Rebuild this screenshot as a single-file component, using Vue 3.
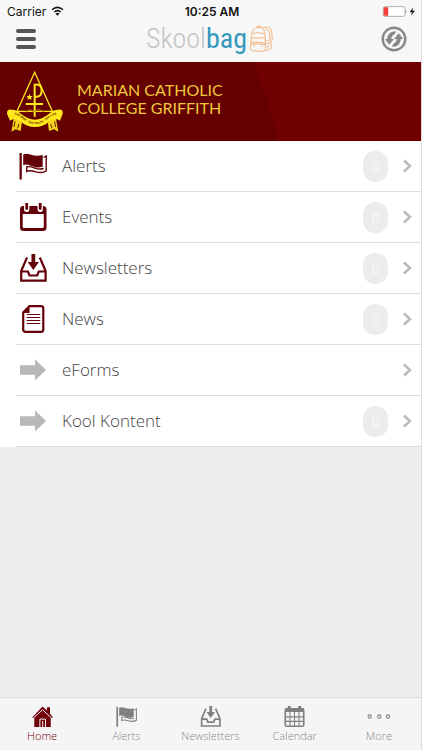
<template>
  <div class="app">
    <header class="header">
      <div class="status">
        <span class="carrier">
          Carrier
          <svg class="wifi" viewBox="0 0 26 20" aria-hidden="true">
            <path d="M2 7.5Q13 -2 24 7.5" fill="none" stroke="currentColor" stroke-width="3" />
            <path d="M6.5 12Q13 6.5 19.5 12" fill="none" stroke="currentColor" stroke-width="3" />
            <path d="M9 15Q13 11.5 17 15L13 19.5Z" fill="currentColor" />
          </svg>
        </span>
        <span class="time">10:25 AM</span>
        <span class="power">
          <svg class="battery" viewBox="0 0 104 34" aria-hidden="true">
            <rect x="2" y="2" width="67" height="30" rx="5" fill="#fff" stroke="#888" stroke-width="2" />
            <path d="M5 4H17V30H5Q3 30 3 28V6Q3 4 5 4Z" fill="#f8403c" />
            <path d="M71 12Q76 17 71 22Z" fill="#555" />
            <path d="M94 5L83 19H91L87 30L100 15H92Z" fill="#111" />
          </svg>
        </span>
      </div>

      <div class="toolbar">
        <button type="button" class="tool menu" aria-label="Menu">
          <span></span>
          <span></span>
          <span></span>
        </button>

        <h1 class="logo">
          <span class="skool">Skool</span><span class="bag">bag</span>
          <svg class="backpack" viewBox="0 0 72 82" fill="none" stroke="#f3b580" stroke-width="3" aria-hidden="true">
            <path d="M8 30Q8 8 28 6Q48 6 48 28L50 70Q50 78 42 78L10 76Q4 75 4 68Z" />
            <path d="M22 7Q24 1 31 2Q37 3 37 8" />
            <path d="M10 24Q28 20 47 25" />
            <path d="M7 38H49M6 51Q26 49 50 53M6 56Q26 54 50 58" />
            <path d="M15 56V64M39 57V65" />
            <path d="M40 7L58 5Q68 8 68 20L70 42L65 47L68 69L50 77" />
            <path d="M48 13Q58 8 61 22L64 43L52 47" />
            <path d="M52 56L65 50M54 70L60 58" />
          </svg>
        </h1>

        <button type="button" class="tool refresh" aria-label="Refresh">
          <svg viewBox="0 0 76 76" aria-hidden="true">
            <circle cx="38" cy="38" r="33" fill="none" stroke="#888" stroke-width="7" />
            <path d="M44 15Q19 15 18 38H11L24 55L38 38H30Q31 27 40 24Z" fill="#888" />
            <path d="M32 61Q57 61 58 38H65L52 21L38 38H46Q45 49 36 52Z" fill="#888" />
          </svg>
        </button>
      </div>
    </header>

    <section class="banner">
      <svg class="crest" viewBox="18 24 174 189" aria-hidden="true">
        <path d="M104 31L51 148H157Z" fill="none" stroke="#ffe81c" stroke-width="4" />
        <path d="M88 95L91 102L98 103L93 107L95 114L88 110L82 114L84 107L79 103L86 102Z" fill="#ffe81c" />
        <path
          d="M104 164V68Q125 66 125 86Q125 105 107 104M77 126H129"
          fill="none"
          stroke="#ffe81c"
          stroke-width="6"
        />
        <path d="M78 152Q88 136 101 150Q116 136 132 150" fill="none" stroke="#b87a10" stroke-width="3" />
        <path d="M42 165L34 209L47 202L62 207L66 178ZM167 165L175 209L162 202L147 207L143 178Z" fill="#f3d31c" />
        <path
          d="M21 155Q20 140 36 143Q50 143 64 156Q84 173 105 173Q126 173 146 156Q160 143 174 143Q190 140 188 155L180 176Q166 165 150 177Q130 195 105 195Q80 195 60 177Q44 165 30 176Z"
          fill="#ffe81c"
        />
        <path id="motto-line" d="M31 160Q48 154 65 168Q84 187 105 187Q128 187 147 168Q163 154 181 160" fill="none" />
        <text class="motto">
          <textPath href="#motto-line" startOffset="50%">THE WAY · THE TRUTH · THE LIFE</textPath>
        </text>
        <path d="M45 178L42 195M57 186L53 199M164 178L167 195M152 186L156 199" stroke="#6b2500" stroke-width="3" />
      </svg>
      <h2 class="school">
        <span>Marian Catholic</span>
        <span>College Griffith</span>
      </h2>
    </section>

    <main class="content">
      <ul class="list">
        <li v-for="item in items" :key="item.name">
          <a href="#" class="row" @click.prevent>
            <svg class="row-icon" :class="{ muted: item.icon === 'arrow' }" viewBox="0 0 28 28" aria-hidden="true">
              <path v-for="(shape, i) in icons[item.icon]" :key="i" :d="shape.d" :class="shape.type" />
            </svg>
            <span class="row-name">{{ item.name }}</span>
            <span v-if="item.count !== null" class="badge">{{ item.count }}</span>
            <svg class="chevron" viewBox="0 0 10 14" aria-hidden="true">
              <path d="M2 1.5L8 7L2 12.5" />
            </svg>
          </a>
        </li>
      </ul>
    </main>

    <nav class="tabs">
      <a
        v-for="tab in tabs"
        :key="tab.name"
        href="#"
        class="tab"
        :class="{ active: tab.name === activeTab }"
        @click.prevent="activeTab = tab.name"
      >
        <svg class="tab-icon" viewBox="0 0 28 28" aria-hidden="true">
          <path v-for="(shape, i) in icons[tab.icon]" :key="i" :d="shape.d" :class="shape.type" />
        </svg>
        <span>{{ tab.name }}</span>
      </a>
    </nav>
  </div>
</template>

<script setup>
import { ref } from 'vue'

const activeTab = ref('Home')

const items = [
  { name: 'Alerts', icon: 'flag', count: 0 },
  { name: 'Events', icon: 'events', count: 0 },
  { name: 'Newsletters', icon: 'inbox', count: 0 },
  { name: 'News', icon: 'page', count: 0 },
  { name: 'eForms', icon: 'arrow', count: null },
  { name: 'Kool Kontent', icon: 'arrow', count: 0 }
]

const tabs = [
  { name: 'Home', icon: 'home' },
  { name: 'Alerts', icon: 'flag' },
  { name: 'Newsletters', icon: 'inbox' },
  { name: 'Calendar', icon: 'calendar' },
  { name: 'More', icon: 'more' }
]

// all icons are drawn in a 28 x 28 box
const icons = {
  flag: [
    { type: 'solid', d: 'M.5 1H2.8V27.5H.5Z' },
    { type: 'solid', d: 'M4.2 2.5C9-.5 14 6 23.7 3V14.8C15 18 10 10.5 4.2 13.2Z' },
    { type: 'line thin', d: 'M24.5 5.5L27.2 4V19C19 24 14 16 7.7 19.5V15C13 13 18 19 24.5 16.5' }
  ],
  events: [
    {
      type: 'solid',
      d: 'M4 3H24Q27.5 3 27.5 6.5V24.5Q27.5 28 24 28H4.5Q1 28 1 24.5V6.5Q1 3 4 3Z'
    },
    { type: 'hole', d: 'M3.7 11H24.8V23.5Q24.8 25 23.3 25H5.2Q3.7 25 3.7 23.5Z' },
    { type: 'hole', d: 'M5 3V6Q5 9 7.7 9T10.4 6V3ZM18.5 3V6Q18.5 9 21.2 9T23.9 6V3Z' },
    { type: 'solid', d: 'M6.3 0H9.1V6Q7.7 8 6.3 6ZM19.8 0H22.6V6Q21.2 8 19.8 6Z' }
  ],
  inbox: [
    { type: 'line', d: 'M8 3.5L2.2 17V26.6H26.6V17L20.8 3.5' },
    { type: 'line', d: 'M2.2 17.5H9L10.5 21.5H18.2L19.8 17.5H26.6' },
    { type: 'solid', d: 'M12.5 0H16.2V8H20L14.3 16L8.7 8H12.5Z' }
  ],
  page: [
    { type: 'line', d: 'M10.5 1.2H22Q24.3 1.2 24.3 3.5V24.5Q24.3 26.8 22 26.8H6.5Q4.2 26.8 4.2 24.5V7.5Z' },
    { type: 'solid', d: 'M3.5 8L10.5 .5V8Z' },
    { type: 'line fine', d: 'M7.7 9.5H21.3M7.7 12.5H21.3M7.7 15.5H21.3M7.7 18.5H21.3' }
  ],
  arrow: [{ type: 'solid', d: 'M1 9.3H16V3.3L27 14L16 24.5V18.7H1Z' }],
  home: [
    { type: 'solid', d: 'M14 .5L20 6V1.5H24V10L28 15.5H0Z' },
    { type: 'solid', d: 'M3 15H25V28H3Z' },
    { type: 'gap', d: 'M2.5 15.5L14 5L25.5 15.5' },
    { type: 'gap', d: 'M10.5 28V17.5H18V28M14.3 20V28' }
  ],
  calendar: [
    {
      type: 'solid',
      d: 'M1 4Q1 2.5 2.5 2.5H5V0H9V2.5H19V0H23V2.5H25.5Q27 2.5 27 4V8H1Z'
    },
    { type: 'line', d: 'M1.7 7V25Q1.7 27 3.7 27H24.3Q26.3 27 26.3 25V7' },
    { type: 'line thin', d: 'M8 8V27M14 8V27M20 8V27M2 14.5H26M2 20.5H26' }
  ],
  more: [
    {
      type: 'line thin',
      d: 'M0 14a2.2 2.2 0 1 0 4.4 0a2.2 2.2 0 1 0-4.4 0M12.8 14a2.2 2.2 0 1 0 4.4 0a2.2 2.2 0 1 0-4.4 0M24.5 14a2.2 2.2 0 1 0 4.4 0a2.2 2.2 0 1 0-4.4 0'
    }
  ]
}
</script>

<style>
body {
  background: #eee;
}
</style>

<style scoped>
.app {
  display: flex;
  flex-direction: column;
  box-sizing: border-box;
  min-height: 100vh;
  border-right: 1px solid #ddd;
  background: #eee;
  font-family: "Open Sans", sans-serif;
}

.header {
  padding-bottom: 6px;
  background: #f7f7f7;
}

.status {
  display: grid;
  grid-template-columns: 1fr auto 1fr;
  align-items: center;
  height: 22px;
  padding: 0 4px 0 7px;
  color: #111;
  font-family: Inter, sans-serif;
  font-size: 12px;
}

.carrier {
  display: flex;
  align-items: center;
  gap: 5px;
}

.wifi {
  width: 13px;
  height: 10px;
}

.time {
  font-weight: 600;
}

.power {
  display: flex;
  justify-content: flex-end;
}

.battery {
  width: 35px;
  height: 11px;
}

.toolbar {
  display: flex;
  align-items: center;
  justify-content: space-between;
  height: 34px;
  padding: 0 14px;
}

.tool {
  padding: 0;
  border: none;
  background: none;
  cursor: pointer;
}

.menu {
  display: flex;
  flex-direction: column;
  gap: 4px;
  width: 24px;
  padding: 0 2px;
}

.menu span {
  height: 4px;
  border-radius: 2px;
  background: #555;
}

.refresh svg {
  display: block;
  width: 26px;
  height: 26px;
}

.logo {
  display: flex;
  align-items: center;
  margin: 0;
  font-family: "Roboto Condensed", "Liberation Sans", sans-serif;
  font-size: 28px;
  font-weight: 400;
  line-height: 34px;
}

.skool {
  color: #c4c4c4;
  font-weight: 300;
}

.bag {
  color: #3498bd;
}

.backpack {
  width: 24px;
  height: 28px;
  margin-left: 2px;
}

.banner {
  display: flex;
  align-items: center;
  gap: 13px;
  height: 79px;
  padding-left: 6px;
  background: radial-gradient(circle 240px at 40px 110px, #640000 99%, #700000 100%);
}

.crest {
  width: 58px;
  height: 63px;
}

.motto {
  fill: #6b2500;
  font-size: 9px;
  font-weight: 700;
  text-anchor: middle;
}

.school {
  display: flex;
  flex-direction: column;
  margin: 0;
  padding-bottom: 6px;
  color: #f0c83c;
  font-family: Lato, sans-serif;
  font-size: 16px;
  font-weight: 400;
  line-height: 18px;
  text-transform: uppercase;
}

.content {
  flex: 1;
}

.list {
  margin: 0;
  padding: 0 0 0 16px;
  background: #fff;
  list-style: none;
}

.row {
  display: flex;
  align-items: center;
  height: 50px;
  padding: 0 9px 0 3px;
  border-bottom: 1px solid #ddd;
  color: #444;
  font-size: 17px;
  font-weight: 300;
  text-decoration: none;
}

.row-icon {
  width: 28px;
  height: 28px;
  margin-right: 15px;
  color: #640008;
}

.row-icon.muted {
  color: #b8b8b8;
}

.row-name {
  flex: 1;
  padding-bottom: 2px;
}

.badge {
  width: 25px;
  border-radius: 12px;
  background: #ececec;
  color: #f8f8f8;
  font-size: 14px;
  font-weight: 400;
  line-height: 31px;
  text-align: center;
}

.chevron {
  width: 10px;
  height: 14px;
  margin-left: 14px;
  fill: none;
  stroke: #bbb;
  stroke-width: 2.5;
}

.solid {
  fill: currentColor;
}

.hole {
  fill: #fff;
}

.gap {
  fill: none;
  stroke: #f5f5f5;
  stroke-width: 1.3;
}

.line {
  fill: none;
  stroke: currentColor;
  stroke-width: 2.2;
}

.line.thin {
  stroke-width: 1.4;
}

.line.fine {
  stroke-width: 1;
}

.tabs {
  display: flex;
  height: 52px;
  border-top: 1px solid #ddd;
  background: #f5f5f5;
}

.tab {
  display: flex;
  flex: 1;
  flex-direction: column;
  align-items: center;
  gap: 1px;
  padding-top: 8px;
  color: #888;
  font-size: 11px;
  font-weight: 300;
  line-height: 16px;
  text-decoration: none;
}

.tab-icon {
  width: 21px;
  height: 21px;
  overflow: visible;
  color: #808080;
}

.tab.active,
.tab.active .tab-icon {
  color: #700008;
}
</style>
